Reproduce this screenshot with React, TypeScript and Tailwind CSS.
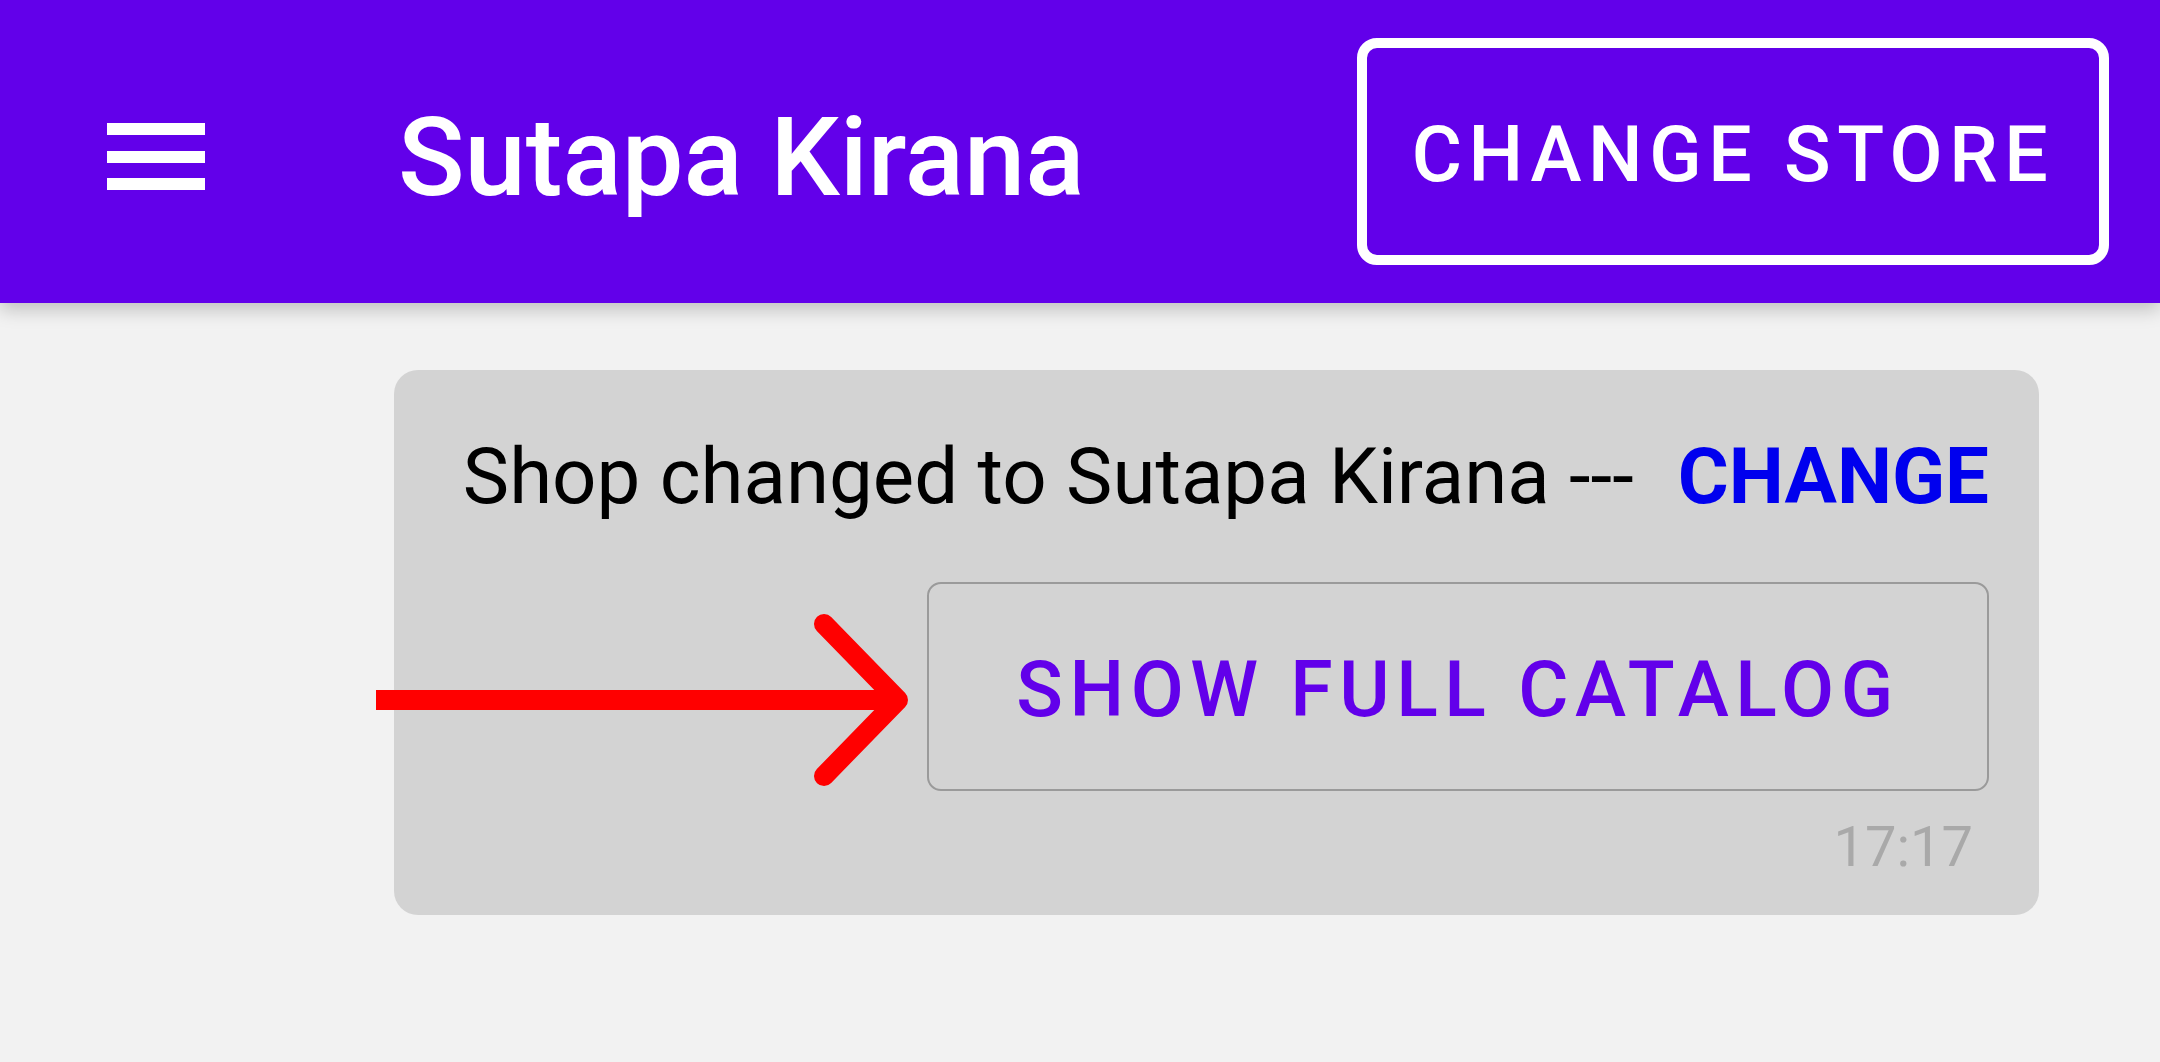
import React from 'react';

const font = { fontFamily: 'Roboto, "Noto Sans", sans-serif' };

const Hamburger = () => (
  <div className="flex flex-col justify-between w-[98px] h-[67px] mt-[10px]">
    <span className="block h-[12px] bg-white" />
    <span className="block h-[12px] bg-white" />
    <span className="block h-[12px] bg-white" />
  </div>
);

const Arrow = () => (
  <svg
    className="absolute left-[366px] top-[606px] pointer-events-none"
    width="560"
    height="190"
    viewBox="366 606 560 190"
  >
    <line x1="376" y1="700" x2="890" y2="700" stroke="#ff0000" strokeWidth="20" />
    <polyline
      points="824,624 898,700 824,776"
      fill="none"
      stroke="#ff0000"
      strokeWidth="20"
      strokeLinecap="round"
      strokeLinejoin="round"
    />
  </svg>
);

export default function App() {
  return (
    <div className="relative w-[2160px] h-[1062px] bg-[#f2f2f2] overflow-hidden" style={font}>
      {/* App bar */}
      <header className="relative z-10 h-[303px] bg-[#6200ea] flex items-center pl-[107px] pr-[51px] shadow-[0_6px_18px_rgba(0,0,0,0.22)]">
        <Hamburger />
        <h1 className="ml-[193px] mt-[12px] text-white text-[110px] leading-none font-medium">Sutapa Kirana</h1>
        <button className="ml-auto w-[752px] h-[227px] pt-[8px] border-[10px] border-white rounded-[20px] flex items-center justify-center text-white text-[77px] leading-none font-medium tracking-[0.085em]">
          CHANGE STORE
        </button>
      </header>

      {/* Chat message */}
      <div className="pl-[394px] pr-[121px] pt-[67px]">
        <div className="bg-[#d3d3d3] rounded-[24px] pt-[68px] pb-[40px] pr-[50px] flex flex-col items-end">
          <p className="text-[78px] leading-none text-black whitespace-nowrap">
            Shop changed to Sutapa Kirana ---
            <span className="ml-[44px] font-bold text-[#0000ee]">CHANGE</span>
          </p>
          <button className="mt-[66px] w-[1062px] h-[209px] pt-[8px] border-2 border-[#9a9a9a] rounded-[14px] flex items-center justify-center text-[#6200ea] text-[77px] leading-none font-medium tracking-[0.085em]">
            SHOW FULL CATALOG
          </button>
          <span className="mt-[28px] mr-[16px] text-[56px] leading-none text-[#a9a9a9]">17:17</span>
        </div>
      </div>

      <Arrow />
    </div>
  );
}
